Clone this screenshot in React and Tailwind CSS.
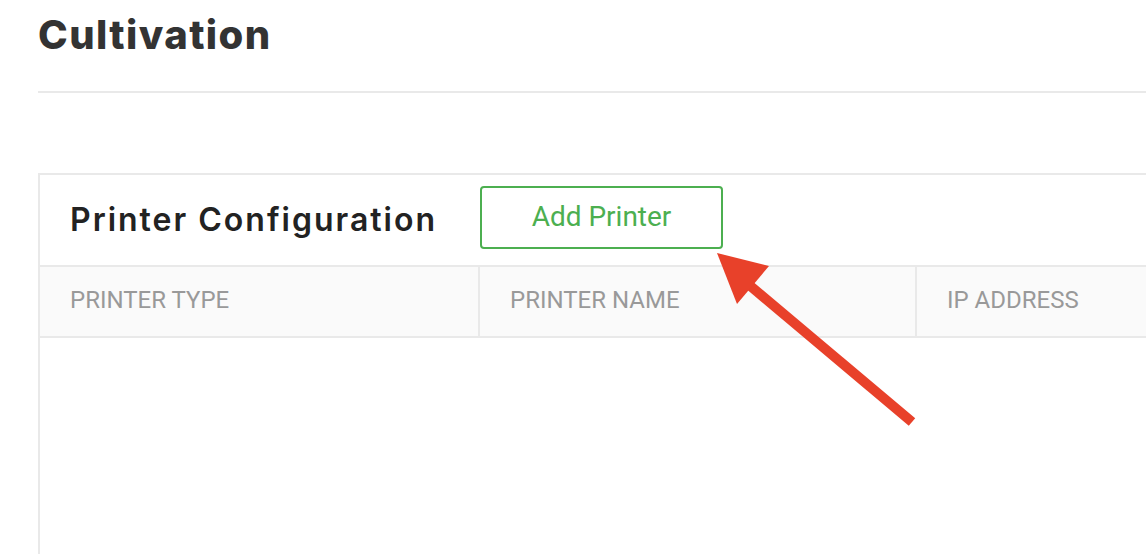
import React from 'react'

const columns = ['PRINTER TYPE', 'PRINTER NAME', 'IP ADDRESS']

const Arrow = () => (
  <svg className="absolute left-0 top-0 pointer-events-none" width="1146" height="554" viewBox="0 0 1146 554">
    <line x1="912" y1="422" x2="748" y2="284" stroke="#e8412a" strokeWidth="10" />
    <polygon points="717,253 769,266 737,304" fill="#e8412a" />
  </svg>
)

const App = () => {
  return (
    <div className="relative w-[1146px] h-[554px] overflow-hidden bg-white" style={{ fontFamily: 'Roboto, sans-serif' }}>
      <div className="w-[1300px] pl-[38px]">
        {/* Page title */}
        <div className="h-[93px] border-b-2 border-[#e9e9e9] pt-[11px]">
          <h1 className="text-[40px] leading-[48px] font-extrabold tracking-[1.4px] text-[#333333]" style={{ fontFamily: 'Inter, sans-serif' }}>
            Cultivation
          </h1>
        </div>

        {/* Printer card */}
        <div className="mt-[80px] border-2 border-[#e9e9e9] h-[400px]">
          <div className="h-[90px] flex items-center pl-[30px]">
            <h2 className="w-[410px] text-[32px] font-semibold tracking-[2px] text-[#222222]" style={{ fontFamily: 'Inter, sans-serif' }}>
              Printer Configuration
            </h2>
            <button className="w-[243px] h-[63px] -mt-[6px] border-2 border-[#4caf50] rounded-[4px] text-[28px] text-[#4caf50]">
              Add Printer
            </button>
          </div>
          <div className="flex h-[73px] bg-[#fafafa] border-y-2 border-[#e9e9e9]">
            {columns.map((col, i) => (
              <div
                key={col}
                className={`flex items-center pl-[30px] pb-[3px] text-[24px] text-[#999999] ${i === 0 ? 'w-[438px]' : i === 1 ? 'w-[437px] border-l-2 border-[#e9e9e9]' : 'flex-1 border-l-2 border-[#e9e9e9]'}`}
              >
                {col}
              </div>
            ))}
          </div>
        </div>
      </div>
      <Arrow />
    </div>
  )
}

export default App
